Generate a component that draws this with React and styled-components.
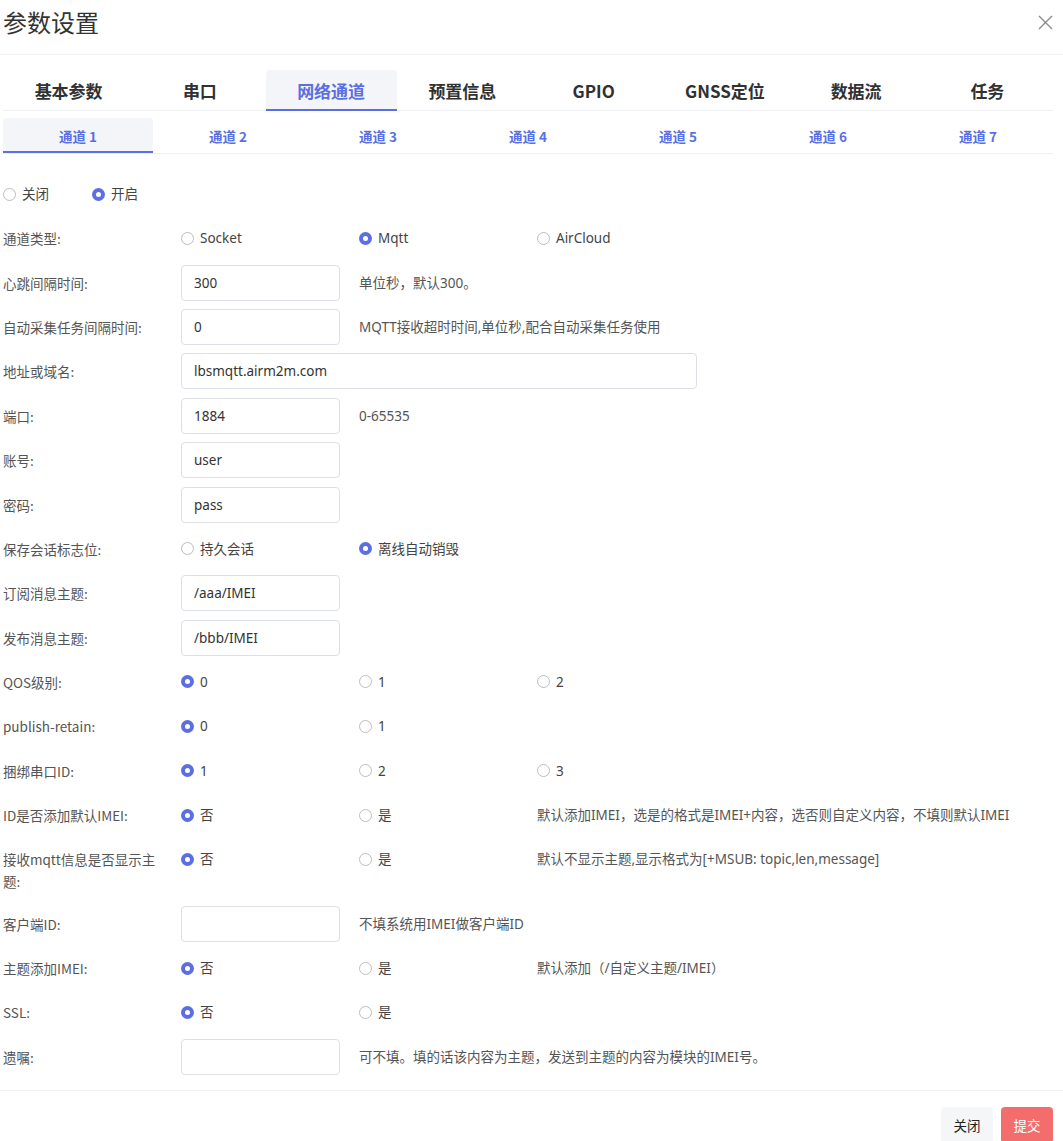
import React, { useState } from 'react';
import styled, { createGlobalStyle } from 'styled-components';

const BLUE = '#5b6fe3';

const GlobalStyle = createGlobalStyle`
	html, body {
		margin: 0;
		padding: 0;
		background: #fff;
	}
	body {
		font-family: 'Noto Sans', 'Noto Sans CJK SC', sans-serif;
		font-size: 13.5px;
		color: #555;
	}
	* {
		box-sizing: border-box;
	}
`;

const Dialog = styled.div`
	width: 1063px;
	display: flex;
	flex-direction: column;
`;

const Header = styled.div`
	display: flex;
	align-items: center;
	justify-content: space-between;
	padding: 6px 10px 16px 3px;
	border-bottom: 1px solid #eef0f3;
`;

const Title = styled.h1`
	margin: 0;
	font-size: 24px;
	line-height: 32px;
	font-weight: 400;
	color: #333;
	font-family: 'Noto Sans CJK SC', sans-serif;
`;

const CloseButton = styled.button`
	border: 0;
	background: none;
	padding: 0;
	width: 16px;
	height: 16px;
	display: flex;
	align-items: center;
	justify-content: center;
	cursor: pointer;
	svg {
		display: block;
	}
`;

const Body = styled.div`
	padding: 15px 10px 0 3px;
`;

const TabBar = styled.div`
	display: flex;
	border-bottom: 1px solid #eef0f3;
`;

const Tab = styled.div`
	flex: 1;
	height: 41px;
	padding-bottom: 1px;
	margin-bottom: -1px;
	display: flex;
	align-items: center;
	justify-content: center;
	font-family: 'Noto Sans CJK SC', sans-serif;
	font-size: 17px;
	font-weight: 700;
	color: ${(p) => (p.$active ? BLUE : '#303133')};
	background: ${(p) => (p.$active ? '#f4f5f8' : 'transparent')};
	border-radius: 4px 4px 0 0;
	box-shadow: ${(p) => (p.$active ? `inset 0 -2px 0 ${BLUE}` : 'none')};
	position: relative;
	z-index: 1;
`;

const SubTabBar = styled.div`
	display: flex;
	margin-top: 7px;
	border-bottom: 1px solid #eef0f3;
`;

const SubTab = styled.div`
	flex: 1;
	height: 35px;
	display: flex;
	align-items: center;
	justify-content: center;
	font-family: 'Noto Sans CJK SC', sans-serif;
	font-size: 13.5px;
	font-weight: 700;
	color: ${BLUE};
	background: ${(p) => (p.$active ? '#f4f5f8' : 'transparent')};
	border-radius: 4px 4px 0 0;
	box-shadow: ${(p) => (p.$active ? `inset 0 -2px 0 ${BLUE}` : 'none')};
`;

const Form = styled.div`
	margin-top: 22px;
	display: flex;
	flex-direction: column;
	gap: 8.36px;
	padding-bottom: 15px;
`;

const Row = styled.div`
	display: grid;
	grid-template-columns: 178px 178px 178px 1fr;
	align-items: start;
	min-height: 36px;
`;

const SwitchRow = styled.div`
	display: flex;
	align-items: center;
	height: 36px;
`;

const Label = styled.div`
	padding: 7px 16px 5px 0;
	line-height: 22px;
	color: #555;
	font-family: 'Noto Sans CJK SC', sans-serif;
`;

const Hint = styled.div`
	padding: 7px 0;
	line-height: 22px;
	color: #555;
	white-space: nowrap;
	font-family: 'Noto Sans', 'Noto Sans CJK SC', sans-serif;
	grid-column: ${(p) => p.$col || 'auto'};
`;

const Input = styled.input`
	height: 36px;
	width: ${(p) => p.$width || 159}px;
	border: 1px solid #dcdfe6;
	border-radius: 4px;
	padding: 0 12px;
	font-family: 'Noto Sans', 'Noto Sans CJK SC', sans-serif;
	font-size: 13.5px;
	color: #333;
	outline: none;
	background: #fff;
	grid-column: ${(p) => p.$span || 'auto'};
`;

const Option = styled.label`
	display: flex;
	align-items: center;
	gap: 6px;
	padding: 7px 0;
	line-height: 22px;
	width: ${(p) => (p.$width ? `${p.$width}px` : 'auto')};
	color: #444;
	cursor: pointer;
	font-family: 'Noto Sans', 'Noto Sans CJK SC', sans-serif;
`;

const Dot = styled.span`
	width: 13px;
	height: 13px;
	border-radius: 50%;
	flex: none;
	background: ${(p) => (p.$checked ? BLUE : '#fff')};
	border: ${(p) => (p.$checked ? 'none' : '1px solid #bdbdbd')};
	position: relative;
	&::after {
		content: '';
		display: ${(p) => (p.$checked ? 'block' : 'none')};
		position: absolute;
		left: 4px;
		top: 4px;
		width: 5px;
		height: 5px;
		border-radius: 50%;
		background: #fff;
	}
`;

const Footer = styled.div`
	border-top: 1px solid #eef0f3;
	padding: 16px 10px 0 3px;
	display: flex;
	justify-content: flex-end;
	gap: 8px;
`;

const Button = styled.button`
	height: 36px;
	padding: 0 12.5px;
	border: 0;
	border-radius: 4px;
	font-family: 'Noto Sans CJK SC', sans-serif;
	font-size: 13.5px;
	color: ${(p) => (p.$primary ? '#fff' : '#222')};
	background: ${(p) => (p.$primary ? '#f36d6d' : '#f5f6f8')};
	cursor: pointer;
`;

const mainTabs = ['基本参数', '串口', '网络通道', '预置信息', 'GPIO', 'GNSS定位', '数据流', '任务'];
const channels = [1, 2, 3, 4, 5, 6, 7];

function Radio({ checked, children, width }) {
	return (
		<Option $width={width}>
			<Dot $checked={checked} />
			{children}
		</Option>
	);
}

function RadioRow({ label, options, value, hint }) {
	return (
		<Row>
			<Label>{label}</Label>
			{options.map((o) => (
				<Radio key={o} checked={o === value}>
					{o}
				</Radio>
			))}
			{hint && <Hint $col="4">{hint}</Hint>}
		</Row>
	);
}

function InputRow({ label, value, hint, wide }) {
	return (
		<Row>
			<Label>{label}</Label>
			{wide ? (
				<Input $span="2 / span 3" $width={516} defaultValue={value} />
			) : (
				<Input defaultValue={value} />
			)}
			{hint && <Hint $col="3 / span 2">{hint}</Hint>}
		</Row>
	);
}

export default function App() {
	const [tab] = useState(2);
	const [channel] = useState(1);

	return (
		<>
			<GlobalStyle />
			<Dialog>
				<Header>
					<Title>参数设置</Title>
					<CloseButton aria-label="close">
						<svg width="15" height="15" viewBox="0 0 15 15">
							<path d="M1 1 L14 14 M14 1 L1 14" stroke="#8c8c8c" strokeWidth="1.4" fill="none" />
						</svg>
					</CloseButton>
				</Header>
				<Body>
					<TabBar>
						{mainTabs.map((t, i) => (
							<Tab key={t} $active={i === tab}>
								{t}
							</Tab>
						))}
					</TabBar>
					<SubTabBar>
						{channels.map((c) => (
							<SubTab key={c} $active={c === channel}>
								通道 {c}
							</SubTab>
						))}
					</SubTabBar>
					<Form>
						<SwitchRow>
							<Radio width={89}>关闭</Radio>
							<Radio checked>开启</Radio>
						</SwitchRow>
						<RadioRow label="通道类型:" options={['Socket', 'Mqtt', 'AirCloud']} value="Mqtt" />
						<InputRow label="心跳间隔时间:" value="300" hint="单位秒，默认300。" />
						<InputRow label="自动采集任务间隔时间:" value="0" hint="MQTT接收超时时间,单位秒,配合自动采集任务使用" />
						<InputRow label="地址或域名:" value="lbsmqtt.airm2m.com" wide />
						<InputRow label="端口:" value="1884" hint="0-65535" />
						<InputRow label="账号:" value="user" />
						<InputRow label="密码:" value="pass" />
						<RadioRow label="保存会话标志位:" options={['持久会话', '离线自动销毁']} value="离线自动销毁" />
						<InputRow label="订阅消息主题:" value="/aaa/IMEI" />
						<InputRow label="发布消息主题:" value="/bbb/IMEI" />
						<RadioRow label="QOS级别:" options={['0', '1', '2']} value="0" />
						<RadioRow label="publish-retain:" options={['0', '1']} value="0" />
						<RadioRow label="捆绑串口ID:" options={['1', '2', '3']} value="1" />
						<RadioRow
							label="ID是否添加默认IMEI:"
							options={['否', '是']}
							value="否"
							hint="默认添加IMEI，选是的格式是IMEI+内容，选否则自定义内容，不填则默认IMEI"
						/>
						<RadioRow
							label="接收mqtt信息是否显示主题:"
							options={['否', '是']}
							value="否"
							hint="默认不显示主题,显示格式为[+MSUB: topic,len,message]"
						/>
						<InputRow label="客户端ID:" value="" hint="不填系统用IMEI做客户端ID" />
						<RadioRow label="主题添加IMEI:" options={['否', '是']} value="否" hint="默认添加（/自定义主题/IMEI）" />
						<RadioRow label="SSL:" options={['否', '是']} value="否" />
						<InputRow label="遗嘱:" value="" hint="可不填。填的话该内容为主题，发送到主题的内容为模块的IMEI号。" />
					</Form>
				</Body>
				<Footer>
					<Button>关闭</Button>
					<Button $primary>提交</Button>
				</Footer>
			</Dialog>
		</>
	);
}
